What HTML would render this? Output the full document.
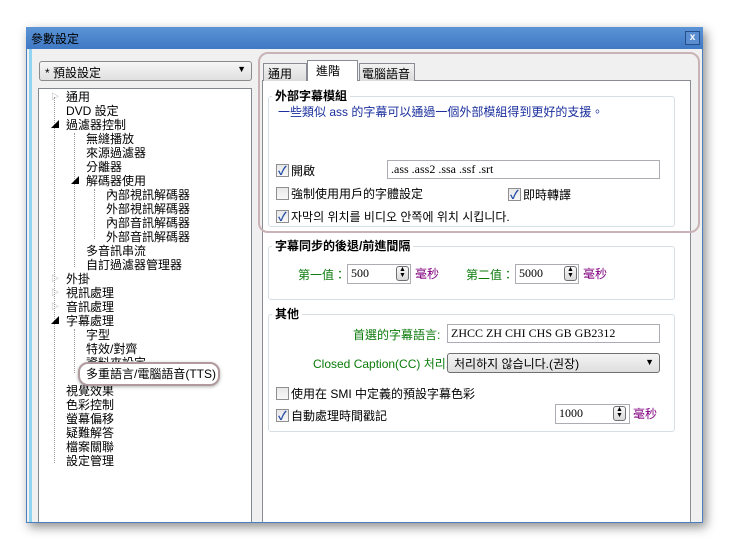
<!DOCTYPE html>
<html><head><meta charset="utf-8"><style>
*{box-sizing:border-box;margin:0;padding:0}
body{width:730px;height:549px;background:#fff;position:relative;overflow:hidden;font-family:"Liberation Sans","Noto Sans CJK TC",sans-serif;font-size:12px;color:#000}
.a{position:absolute;white-space:nowrap}
.win{left:26px;top:27px;width:677px;height:496px;background:#f0f0f0;border:1px solid #4a7fc0;box-shadow:3px 4px 10px rgba(0,0,0,.45)}
.title{left:26px;top:27px;width:677px;height:22px;background:linear-gradient(#5c94d6,#3f78c4);}
.tt{left:31px;top:30px;font-size:12px;color:#000}
.close{left:685px;top:31px;width:15px;height:14px;border:1px solid #254f8a;background:#5a8ed0;color:#fff;font-size:10px;line-height:12px;text-align:center;font-weight:bold}
.lb{left:29px;top:49px;width:3px;height:473px;background:#8fd4f0}
.combo{left:39px;top:61px;width:213px;height:20px;border:1px solid #8a8a8a;border-radius:3px;background:linear-gradient(#f6f6f6,#e0e0e0);padding:2px 5px}
.tree{left:38px;top:88px;width:214px;height:434px;background:#fff;border:1px solid #828790;border-bottom:none}
.ti{position:absolute;font-size:12px;line-height:14px;white-space:nowrap}
.m{position:absolute;font-size:8px;line-height:14px}
.dl{position:absolute;border-left:1px dotted #999}
.panel{left:262px;top:80px;width:429px;height:442px;background:#fff;border:1px solid #898c95;border-bottom:none}
.tab{top:63px;height:18px;border:1px solid #898c95;border-bottom:none;background:linear-gradient(#f2f2f2,#dcdcdc);padding:1px 4px;font-size:12px;white-space:nowrap;overflow:hidden}
.grp{border:1px solid #d5dfe5;border-radius:3px}
.gt{font-weight:bold;background:#fff;padding:0 3px;font-size:12px}
.cb{width:13px;height:13px;border:1px solid #8f8f8f;background:linear-gradient(#e8e8e8,#f8f8f8)}
.ck::after{content:"✓";position:absolute;left:1px;top:-3px;font-size:12px;color:#2a4fa8;font-weight:bold}
.inp{border:1px solid #abadb3;background:#fff;padding:1px 3px;font-family:"Liberation Serif",serif;font-size:12px}
.spin{width:13px;height:15px;border:1px solid #707070;border-radius:3px;background:linear-gradient(#fafafa,#d8d8d8);font-size:7px;line-height:6px;text-align:center}
.green{color:#0a7a0a}.purp{color:#800080}
</style></head><body>
<div class="a win"></div>
<div class="a title"></div>
<div class="a tt">參數設定</div>
<div class="a close">x</div>
<div class="a lb"></div>
<div class="a combo">* 預設設定<span style="position:absolute;right:5px;top:2px;font-size:9px">▼</span></div>
<div class="a tree">
<div class="dl" style="left:15px;top:8px;height:366px"></div>
<div class="dl" style="left:35px;top:44px;height:134px"></div>
<div class="dl" style="left:55px;top:100px;height:50px"></div>
<div class="dl" style="left:35px;top:240px;height:44px"></div>
<div class="m" style="left:12px;top:1px;color:#999">▷</div><div class="ti" style="left:27px;top:1px">通用</div>
<div class="ti" style="left:27px;top:15px">DVD 設定</div>
<div class="m" style="left:12px;top:29px">◢</div><div class="ti" style="left:27px;top:29px">過濾器控制</div>
<div class="ti" style="left:47px;top:43px">無縫播放</div>
<div class="ti" style="left:47px;top:57px">來源過濾器</div>
<div class="ti" style="left:47px;top:71px">分離器</div>
<div class="m" style="left:32px;top:85px">◢</div><div class="ti" style="left:47px;top:85px">解碼器使用</div>
<div class="ti" style="left:67px;top:99px">內部視訊解碼器</div>
<div class="ti" style="left:67px;top:113px">外部視訊解碼器</div>
<div class="ti" style="left:67px;top:127px">內部音訊解碼器</div>
<div class="ti" style="left:67px;top:141px">外部音訊解碼器</div>
<div class="ti" style="left:47px;top:155px">多音訊串流</div>
<div class="ti" style="left:47px;top:169px">自訂過濾器管理器</div>
<div class="m" style="left:12px;top:183px;color:#999">▷</div><div class="ti" style="left:27px;top:183px">外掛</div>
<div class="m" style="left:12px;top:197px;color:#999">▷</div><div class="ti" style="left:27px;top:197px">視訊處理</div>
<div class="m" style="left:12px;top:211px;color:#999">▷</div><div class="ti" style="left:27px;top:211px">音訊處理</div>
<div class="m" style="left:12px;top:225px">◢</div><div class="ti" style="left:27px;top:225px">字幕處理</div>
<div class="ti" style="left:47px;top:239px">字型</div>
<div class="ti" style="left:47px;top:253px">特效/對齊</div>
<div class="ti" style="left:47px;top:267px">資料來設定</div>
<div class="ti" style="left:27px;top:295px">視覺效果</div>
<div class="ti" style="left:27px;top:309px">色彩控制</div>
<div class="ti" style="left:27px;top:323px">螢幕偏移</div>
<div class="ti" style="left:27px;top:337px">疑難解答</div>
<div class="ti" style="left:27px;top:351px">檔案關聯</div>
<div class="ti" style="left:27px;top:365px">設定管理</div>
<div class="ti" style="left:39px;top:273px;width:142px;height:24px;border:2px solid #b09a9e;border-radius:10px;background:#fff;padding:3px 0 0 6px;box-shadow:0 1px 3px rgba(0,0,0,.3)">多重語言/電腦語音(TTS)</div>
</div>
<div class="a panel"></div>
<div class="a tab" style="left:263px;width:44px">通用</div>
<div class="a tab" style="left:307px;top:60px;height:21px;width:51px;background:#fff;z-index:2;padding-left:8px">進階</div>
<div class="a tab" style="left:359px;width:56px;padding:1px 2px">電腦語音</div>
<div class="a" style="left:258px;top:52px;width:442px;height:181px;border:2px solid #c9b3b6;border-radius:10px;z-index:3"></div>
<div class="a grp" style="left:268px;top:96px;width:407px;height:131px"></div>
<div class="a gt" style="left:272px;top:87px">外部字幕模組</div>
<div class="a" style="left:278px;top:103px;color:#1a2e9c">一些類似 ass 的字幕可以通過一個外部模組得到更好的支援。</div>
<div class="a cb ck" style="left:276px;top:164px"></div><div class="a" style="left:291px;top:162px">開啟</div>
<div class="a inp" style="left:387px;top:160px;width:273px;height:19px">.ass .ass2 .ssa .ssf .srt</div>
<div class="a cb" style="left:276px;top:187px"></div><div class="a" style="left:291px;top:185px">強制使用用戶的字體設定</div>
<div class="a cb ck" style="left:508px;top:188px"></div><div class="a" style="left:523px;top:186px">即時轉譯</div>
<div class="a cb ck" style="left:276px;top:210px"></div><div class="a" style="left:291px;top:208px">자막의 위치를 비디오 안쪽에 위치 시킵니다.</div>
<div class="a grp" style="left:268px;top:246px;width:407px;height:54px"></div>
<div class="a gt" style="left:272px;top:237px">字幕同步的後退/前進間隔</div>
<div class="a green" style="left:298px;top:266px">第一值：</div>
<div class="a inp" style="left:347px;top:264px;width:64px;height:20px">500</div>
<div class="a spin" style="left:396px;top:266px">▲<br>▼</div>
<div class="a purp" style="left:415px;top:265px">毫秒</div>
<div class="a green" style="left:466px;top:266px">第二值：</div>
<div class="a inp" style="left:515px;top:264px;width:64px;height:20px">5000</div>
<div class="a spin" style="left:564px;top:266px">▲<br>▼</div>
<div class="a purp" style="left:583px;top:265px">毫秒</div>
<div class="a grp" style="left:268px;top:314px;width:407px;height:118px"></div>
<div class="a gt" style="left:272px;top:305px">其他</div>
<div class="a green" style="left:353px;top:326px">首選的字幕語言:</div>
<div class="a inp" style="left:447px;top:324px;width:213px;height:19px">ZHCC ZH CHI CHS GB GB2312</div>
<div class="a green" style="left:313px;top:355px">Closed Caption(CC) 처리:</div>
<div class="a" style="left:447px;top:353px;width:213px;height:20px;border:1px solid #707070;border-radius:3px;background:linear-gradient(#f4f4f4,#dedede);padding:1px 6px">처리하지 않습니다.(권장)<span style="position:absolute;right:5px;top:3px;font-size:9px">▼</span></div>
<div class="a cb" style="left:276px;top:387px"></div><div class="a" style="left:291px;top:385px">使用在 SMI 中定義的預設字幕色彩</div>
<div class="a cb ck" style="left:276px;top:409px"></div><div class="a" style="left:291px;top:407px">自動處理時間戳記</div>
<div class="a inp" style="left:555px;top:404px;width:75px;height:20px">1000</div>
<div class="a spin" style="left:613px;top:406px">▲<br>▼</div>
<div class="a purp" style="left:633px;top:405px">毫秒</div>
</body></html>
